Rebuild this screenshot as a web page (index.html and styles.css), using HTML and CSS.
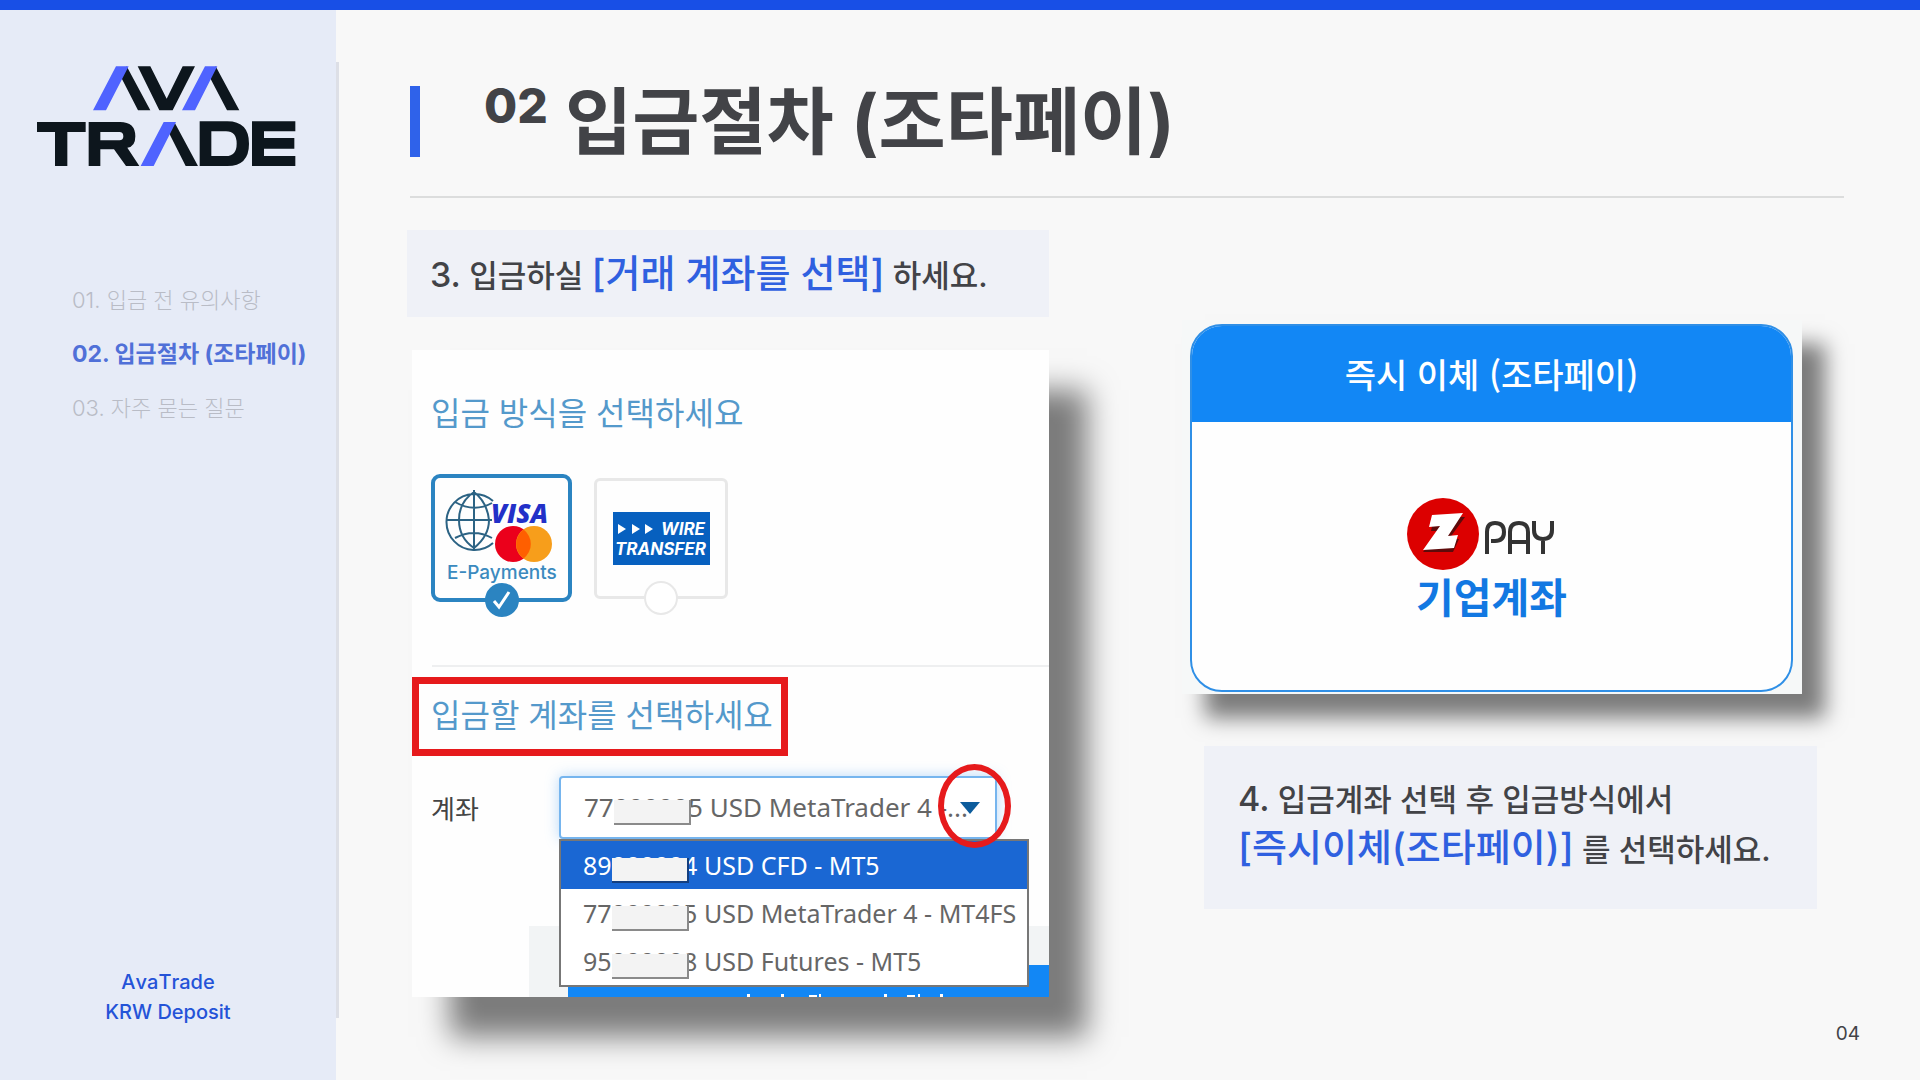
FILE: index.html
```html
<!DOCTYPE html>
<html lang="ko">
<head>
<meta charset="utf-8">
<meta name="viewport" content="width=device-width, initial-scale=1">
<title>AvaTrade KRW Deposit</title>
<link rel="stylesheet" href="styles.css">
</head>
<body>
<aside class="sidebar">
  <svg class="logo" viewBox="0 0 840 360" width="280" height="120" role="img" aria-label="AVA TRADE">
    <g fill="#0d161d">
      <path d="M290 34L361 166H324L274 68ZM323 34H361L410 131L458 34H495L428 166H388ZM557 34L628 166H591L540 68Z"/>
      <path d="M21 201H167V231H112V333H75V231H21ZM176 201H270Q316 201 316 244Q316 276 292 278L328 333H288L252 283H211V333H176ZM211 231V256H268Q280 256 280 244Q280 231 268 231Z"/>
      <path d="M433 201L504 333H467L417 234ZM509 199H592Q657 199 657 266Q657 333 592 333H509ZM544 229V303H588Q620 303 620 266Q620 229 588 229ZM666 199H796V229H702V249H793V281H702V303H796V333H666Z"/>
    </g>
    <path fill="#4f63ff" d="M258 34H296L228 166H189ZM525 34H562L495 166H456ZM401 201H438L371 333H332Z"/>
  </svg>
  <nav class="toc">
    <a href="#notice">01. 입금 전 유의사항</a>
    <a href="#steps" class="current" aria-current="page">02. 입금절차 (조타페이)</a>
    <a href="#faq">03. 자주 묻는 질문</a>
  </nav>
  <p class="brand">AvaTrade<br>KRW Deposit</p>
</aside>
<div class="rule"></div>
<main class="main" id="steps">
  <header class="head">
    <h1><span class="num">02</span> 입금절차 (조타페이)</h1>
  </header>
  <div class="cols">
    <section class="step-a">
      <p class="note note-a"><span class="no">3.</span> 입금하실 <strong>[거래 계좌를 선택]</strong> 하세요.</p>
      <form class="shot">
        <h2 class="q">입금 방식을 선택하세요</h2>
        <div class="tiles">
          <label class="tile on">
            <svg viewBox="0 0 133 120" width="133" height="120" role="img">
              <g fill="none" stroke="#2c6384" stroke-width="2">
                <path d="M58 23A28 28 0 1 0 58 65M39 12V72M11 42H57M20 24Q39 35 57 25M20 60Q39 50 57 60M39 14Q24 24 24 42T39 70M39 14Q52 24 54 42Q54 58 39 70"/>
              </g>
              <text x="56" y="45" class="visa">VISA</text>
              <circle cx="78" cy="66" r="18" fill="#eb001b"/>
              <circle cx="99" cy="66" r="18" fill="#f79e1b"/>
              <path d="M88.500 51.500A18 18 0 0 1 88.500 80.500A18 18 0 0 1 88.500 51.500" fill="#ff5f00"/>
              <text x="12" y="101" class="epay">E-Payments</text>
            </svg>
            <input type="radio" name="method" checked>
            <svg class="tick" viewBox="0 0 34 34" width="34" height="34"><path d="M9 18L14 24L24 9" fill="none" stroke="#fff" stroke-width="3"/></svg>
          </label>
          <label class="tile">
            <svg viewBox="0 0 97 53" width="97" height="53" role="img">
              <path fill="#0760bf" d="M0 0H97V53H0Z"/>
              <path fill="#fff" d="M5 12L13 17L5 22ZM19 12L27 17L19 22ZM32 12L40 17L32 22Z"/>
              <text x="48" y="23" class="wire">WIRE</text>
              <text x="2" y="43" class="wire">TRANSFER</text>
            </svg>
            <input type="radio" name="method">
          </label>
        </div>
        <hr class="sep">
        <h2 class="q boxed">입금할 계좌를 선택하세요</h2>
        <div class="row">
          <label for="account">계좌</label>
          <div class="field">
            <select id="account"><option>77000005 USD MetaTrader 4 -...</option></select>
            <span class="mask"></span>
            <svg class="arrow" viewBox="0 0 20 12" width="20" height="12"><path fill="#0d5c9c" d="M0 0H20L10 12Z"/></svg>
            <ul class="menu">
              <li class="active">89000004 USD CFD - MT5<span class="mask"></span></li>
              <li>77000005 USD MetaTrader 4 - MT4FS<span class="mask"></span></li>
              <li>95000008 USD Futures - MT5<span class="mask"></span></li>
            </ul>
            <span class="ring"></span>
          </div>
        </div>
        <div class="action">
          <button type="button"><svg viewBox="0 0 200 3" width="200" height="3"><path fill="#fff" d="M0 0H3V3H0ZM34 0H37V3H34ZM62 1H70V3H62ZM72 0H74V3H72ZM137 0H140V3H137ZM160 1H168V3H160ZM171 0H173V3H171ZM193 0H196V3H193Z"/></svg></button>
        </div>
      </form>
    </section>
    <section class="step-b">
      <div class="pay-shot">
        <article class="pay">
          <h2>즉시 이체 (조타페이)</h2>
          <div class="pay-body">
            <svg viewBox="0 0 170 72" width="170" height="72" role="img">
              <circle cx="36" cy="36" r="36" fill="#dc0000"/>
              <path fill="#5e0a0a" d="M27 19H58L42 41H52L46 54H16L33 33H24Z"/>
              <path fill="#fff" d="M25 17L56 15L41 38L51 37L47 50L16 52L33 28L22 29Z"/>
              <g fill="none" stroke="#333" stroke-width="4">
                <path d="M80 56V34Q80 25 88 25Q97 25 97 34Q97 43 88 43H84M103 56V34Q103 25 112 25Q121 25 121 34V56M103 44H121M127 23V32Q127 41 136 41Q145 41 145 32V23M136 41V56"/>
              </g>
            </svg>
            <strong>기업계좌</strong>
          </div>
        </article>
      </div>
      <p class="note note-b"><span class="no">4.</span> 입금계좌 선택 후 입금방식에서<br><strong>[즉시이체(조타페이)]</strong> 를 선택하세요.</p>
    </section>
  </div>
  <span class="page">04</span>
</main>
</body>
</html>
```

FILE: styles.css
```css
* { box-sizing: border-box; margin: 0; padding: 0; }
body {
  display: flex;
  min-height: 100vh;
  border-top: 10px solid #184fe6;
  background: #f8f8f8;
  color: #424347;
  font-family: Inter, "Noto Sans CJK KR", sans-serif;
}

/* sidebar */
.sidebar {
  display: flex;
  flex-direction: column;
  flex: 0 0 336px;
  padding: 45px 0 53px;
  background: #e6ebf7;
}
.logo { margin-left: 30px; }
.toc {
  display: flex;
  flex-direction: column;
  margin: 98px 0 0 72px;
}
.toc a {
  color: #b9bcc6;
  font-size: 22px;
  font-weight: 300;
  line-height: 54px;
  text-decoration: none;
  white-space: nowrap;
}
.toc .current { color: #5070d8; font-size: 23px; font-weight: 700; }
.brand {
  margin-top: auto;
  color: #2453d8;
  font-size: 20px;
  font-weight: 500;
  font-kerning: none;
  line-height: 30px;
  text-align: center;
}
.rule {
  flex: 0 0 3px;
  margin: 52px 0 62px;
  background: #dddfe6;
}

/* main column */
.main {
  position: relative;
  flex: 1;
  min-width: 0;
  padding: 76px 76px 80px 68px;
}
.head {
  margin: 0 0 32px 3px;
  padding-bottom: 39px;
  border-bottom: 2px solid #dcdddd;
}
h1 {
  padding-left: 64px;
  border-left: 10px solid #2f62ea;
  font-size: 73px;
  font-weight: 700;
  line-height: 71px;
  height: 71px;
}
.num { font-size: 48px; font-weight: 800; vertical-align: 25px; line-height: 1px; }
.cols {
  display: grid;
  grid-template-columns: minmax(0, 642fr) minmax(0, 620fr);
  gap: 133px;
  margin-right: 42px;
}

/* instruction strips */
.note {
  background: #eff1f7;
  font-size: 31px;
  font-weight: 500;
  line-height: 50px;
  white-space: nowrap;
}
.note strong { color: #2f60e0; font-size: 38px; font-weight: 500; line-height: 1px; }
.note .no { font-size: 34px; line-height: 1px; }
.note-a { padding: 21px 23px 16px; }
.note-b { margin: 52px -15px 0 22px; padding: 29px 34px 34px; }

/* deposit form */
.shot {
  margin: 33px 0 0 5px;
  padding-top: 37px;
  background: #fefefe;
  box-shadow: 38px 40px 28px rgba(0, 0, 0, .5);
  font-family: "Noto Sans", "Noto Sans CJK KR", sans-serif;
}
.q {
  margin-left: 19px;
  color: #5499cb;
  font-family: "Noto Sans CJK KR", sans-serif;
  font-size: 32px;
  font-weight: 400;
  line-height: 48px;
}
.boxed {
  width: fit-content;
  margin: 10px 0 0;
  padding: 5px 8px 12px 12px;
  border: 7px solid #e61a1c;
}
.tiles {
  display: flex;
  align-items: center;
  gap: 22px;
  margin: 39px 0 0 19px;
}
.tile {
  position: relative;
  display: grid;
  place-items: center;
  width: 134px;
  height: 121px;
  border: 3px solid #e8e8e8;
  border-radius: 6px;
}
.tile.on {
  width: 141px;
  height: 128px;
  border: 4px solid #2b84c1;
  border-radius: 9px;
}
.tile input, .tile .tick {
  position: absolute;
  left: calc(50% - 17px);
  bottom: -19px;
  width: 34px;
  height: 34px;
}
.tile input {
  appearance: none;
  border: 2px solid #e8e8e8;
  border-radius: 50%;
  background: #fff;
}
.tile input:checked { border-color: #2b84c1; background: #2b84c1; }
.visa { fill: #2230c8; font: italic 800 26px "Open Sans", sans-serif; }
.epay { fill: #3b8abf; font: 500 19px Inter, sans-serif; }
.wire { fill: #fff; font: italic 700 17px Inter, sans-serif; }
.sep {
  margin: 63px 0 0 20px;
  border: 0;
  border-top: 2px solid #eeeff0;
}
.row {
  display: grid;
  grid-template-columns: 128px minmax(0, 438px);
  align-items: center;
  margin: 20px 0 0 19px;
  color: #5a5a5a;
  font-size: 26px;
}
.row label { color: #444; font-family: "Noto Sans CJK KR", sans-serif; }
.field { position: relative; }
select {
  appearance: none;
  display: block;
  width: 100%;
  height: 63px;
  padding: 0 0 2px 23px;
  border: 2px solid #76b5ee;
  border-radius: 4px;
  background: #fff;
  box-shadow: 0 0 14px rgba(80, 160, 240, .4);
  color: #666;
  font: inherit;
}
.mask {
  position: absolute;
  top: 24px;
  left: 55px;
  width: 77px;
  height: 25px;
  border: solid #8a8a8a;
  border-width: 0 2px 2px 0;
  background: #f3f3f3;
}
.arrow { position: absolute; top: 26px; right: 17px; }
.menu {
  position: absolute;
  z-index: 1;
  top: 100%;
  left: 0;
  width: 470px;
  border: 2px solid #777;
  background: #fff;
  list-style: none;
}
.menu li {
  position: relative;
  padding-left: 22px;
  color: #666;
  font-size: 25px;
  line-height: 48px;
  white-space: nowrap;
}
.menu .mask { top: 17px; left: 51px; }
.menu .active { background: #1a67d3; color: #fff; }
.menu .active .mask { border-color: #143f80; }
.ring {
  position: absolute;
  z-index: 2;
  top: -12px;
  right: -14px;
  width: 73px;
  height: 84px;
  border: 6px solid #e61a1c;
  border-radius: 50%;
}
.action {
  height: 71px;
  margin: 87px 0 0 117px;
  padding: 39px 0 0 39px;
  background: #f2f4f5;
}
.action button {
  display: flex;
  align-items: flex-end;
  justify-content: center;
  width: 100%;
  height: 32px;
  padding-left: 76px;
  border: 0;
  border-radius: 5px 0 0 0;
  background: #1287f5;
}

/* payment card */
.pay-shot {
  margin-top: 90px;
  padding: 4px 9px 2px 8px;
  background: #f6f8f8;
  box-shadow: 23px 24px 20px rgba(0, 0, 0, .5);
}
.pay {
  overflow: hidden;
  border: 2px solid #2f8fe6;
  border-radius: 32px;
  background: #fefefe;
  font-family: "Noto Sans CJK KR", sans-serif;
  text-align: center;
}
.pay h2 {
  background: #1287f5;
  color: #fff;
  font-size: 34px;
  font-weight: 500;
  line-height: 96px;
}
.pay-body {
  display: flex;
  flex-direction: column;
  align-items: center;
  padding: 76px 0 70px;
}
.pay-body strong { color: #1278e2; font-size: 41px; font-weight: 700; line-height: 50px; }
.page {
  position: absolute;
  right: 60px;
  bottom: 34px;
  font-size: 19px;
  line-height: 24px;
}
```
